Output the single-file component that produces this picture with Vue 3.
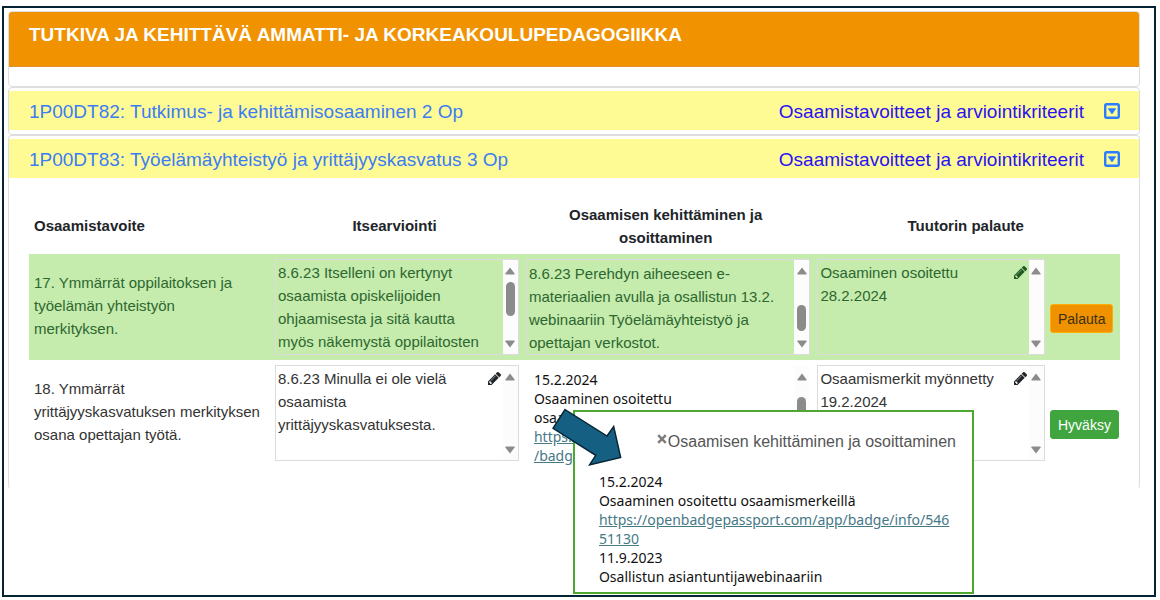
<script setup>
const modules = [
  { id: 'm82', title: '1P00DT82: Tutkimus- ja kehittämisosaaminen 2 Op', open: false },
  { id: 'm83', title: '1P00DT83: Työelämäyhteistyö ja yrittäjyyskasvatus 3 Op', open: true },
]

const rows = [
  {
    id: 17,
    done: true,
    goal: '17. Ymmärrät oppilaitoksen ja\ntyöelämän yhteistyön\nmerkityksen.',
    action: 'Palauta',
    notes: [
      {
        lines: ['8.6.23 Itselleni on kertynyt', 'osaamista opiskelijoiden', 'ohjaamisesta ja sitä kautta', 'myös näkemystä oppilaitosten'],
        thumb: 'upper',
      },
      {
        lines: ['8.6.23 Perehdyn aiheeseen e-', 'materiaalien avulla ja osallistun 13.2.', 'webinaariin Työelämäyhteistyö ja', 'opettajan verkostot.'],
        thumb: 'lower',
      },
      { lines: ['Osaaminen osoitettu', '28.2.2024'], edit: true },
    ],
  },
  {
    id: 18,
    done: false,
    goal: '18. Ymmärrät\nyrittäjyyskasvatuksen merkityksen\nosana opettajan työtä.',
    action: 'Hyväksy',
    notes: [
      { lines: ['8.6.23 Minulla ei ole vielä', 'osaamista', 'yrittäjyyskasvatuksesta.'], edit: true },
      { callout: true, thumb: 'middle' },
      { lines: ['Osaamismerkit myönnetty', '19.2.2024'], edit: true },
    ],
  },
]
</script>

<template>
  <main class="frame">
    <header class="card heading-card">
      <h1>TUTKIVA JA KEHITTÄVÄ AMMATTI- JA KORKEAKOULUPEDAGOGIIKKA</h1>
    </header>

    <section v-for="m in modules" :key="m.id" class="card" :class="{ open: m.open }">
      <div class="bar">
        <h2>{{ m.title }}</h2>
        <a class="criteria" href="#">Osaamistavoitteet ja arviointikriteerit</a>
        <button class="toggle" type="button" aria-label="Avaa tai sulje">
          <svg viewBox="0 0 16 16" width="16" height="16">
            <rect x="1.2" y="1.2" width="13.6" height="13.6" rx="1.5" fill="none" stroke="#2b7cff" stroke-width="2.4" />
            <path d="M4.3 5.3h7.4q.6.2.2.8L8.5 10.8q-.5.5-1 0L4.1 6.1q-.4-.6.2-.8z" fill="#2b7cff" />
          </svg>
        </button>
      </div>

      <div v-if="m.open" class="body">
        <table>
          <colgroup>
            <col class="c-goal" />
            <col class="c-self" />
            <col />
            <col class="c-tutor" />
            <col class="c-act" />
          </colgroup>
          <thead>
            <tr>
              <th class="left" scope="col">Osaamistavoite</th>
              <th scope="col">Itsearviointi</th>
              <th scope="col">Osaamisen kehittäminen ja<br />osoittaminen</th>
              <th scope="col" colspan="2">Tuutorin palaute</th>
            </tr>
          </thead>
          <tbody>
            <tr v-for="r in rows" :key="r.id" :class="{ done: r.done }">
              <td class="goal">{{ r.goal }}</td>
              <td v-for="(n, i) in r.notes" :key="i">
                <div class="note-wrap">
                  <div class="note" :class="{ bare: n.callout }">
                    <div v-if="n.callout" class="snippet">
                      15.2.2024<br />Osaaminen osoitettu<br />osaamismerkeillä<br />
                      <a href="#">https://openbadge<br />/badge/info/54651</a>
                    </div>
                    <div v-else class="note-text" :class="{ scrolled: n.thumb === 'lower' }">
                      <button v-if="n.edit" class="edit" type="button" aria-label="Muokkaa">
                        <svg viewBox="0 149 1515 1515" width="13" height="13">
                          <path
                            fill="currentColor"
                            fill-rule="evenodd"
                            d="M363 1536l91-91-235-235-91 91v107h128v128zM886 608q0-22-22-22-10 0-17 7l-542 542q-7 7-7 17 0 22 22 22 10 0 17-7l542-542q7-7 7-17zM832 416l416 416-832 832H0v-416zM1515 512q0 53-37 90l-166 166-416-416 166-165q36-38 90-38 53 0 91 38l235 234q37 39 37 91z"
                          />
                        </svg>
                      </button>
                      <span v-for="l in n.lines" :key="l" class="line">{{ l }}</span>
                    </div>
                    <div class="scroll" aria-hidden="true">
                      <svg viewBox="0 0 10 8" width="10" height="8"><path d="M5 .5 9.6 6.6q.2.9-.6.9H1q-.8 0-.6-.9z" /></svg>
                      <div class="track"><i v-if="n.thumb" class="thumb" :class="n.thumb"></i></div>
                      <svg viewBox="0 0 10 8" width="10" height="8"><path d="M5 7.5.4 1.4Q.2.5 1 .5h8q.8 0 .6.9z" /></svg>
                    </div>
                  </div>

                  <template v-if="n.callout">
                    <aside class="popup">
                      <div class="popup-title">
                        <button type="button" class="close" aria-label="Sulje">
                          <svg viewBox="0 0 10 10" width="10" height="10">
                            <path d="M1.2 1.2l7.6 7.6M8.8 1.2l-7.6 7.6" stroke="#7c7c7c" stroke-width="2.4" fill="none" />
                          </svg>
                        </button>
                        <span>Osaamisen kehittäminen ja osoittaminen</span>
                      </div>
                      <p>
                        15.2.2024<br />Osaaminen osoitettu osaamismerkeillä<br />
                        <a href="#">https://openbadgepassport.com/app/badge/info/546<br />51130</a><br />
                        11.9.2023<br />Osallistun asiantuntijawebinaariin
                      </p>
                    </aside>
                    <svg class="arrow" viewBox="552 408 70 59" width="70" height="59" aria-hidden="true">
                      <path
                        d="M565 409.5 607 436 613.7 426.5 620.7 457.5 589.5 465 595.7 455.3 553 428.3z"
                        fill="#156082"
                        stroke="#042433"
                        stroke-width="1.4"
                      />
                    </svg>
                  </template>
                </div>
              </td>
              <td class="act">
                <button class="btn" :class="r.done ? 'orange' : 'green'" type="button">{{ r.action }}</button>
              </td>
            </tr>
          </tbody>
        </table>
      </div>
    </section>
  </main>
</template>

<style>
body {
  background: #fff;
}
</style>

<style scoped>
* {
  box-sizing: border-box;
}
.frame {
  margin: 6px 4px 3px 2px;
  padding: 3px 14px 0 4px;
  min-height: calc(100vh - 9px);
  border: 2px solid #042433;
  font-family: "Liberation Sans", Arial, sans-serif;
  font-size: 15px;
  line-height: 23px;
  color: #333;
  display: flow-root;
}
button {
  font-family: inherit;
  border: 0;
  padding: 0;
  background: none;
  cursor: pointer;
}
svg {
  display: block;
}
.card {
  border: 1px solid #dedede;
  border-radius: 4px;
  padding: 3px 0 4px;
}
.heading-card {
  padding: 0 0 19px;
}
h1 {
  margin: 0;
  padding: 11px 20px 20px;
  font-size: 19px;
  line-height: 23px;
  font-weight: 700;
  color: #fff;
  background: #f19200;
  border-bottom: 1px solid #e0922a;
  border-radius: 3px 3px 0 0;
}
.bar {
  display: flex;
  align-items: center;
  height: 39px;
  padding: 1px 19px 0 20px;
  background: #fffb94;
}
h2 {
  flex: 1;
  margin: 0;
  font-size: 19px;
  font-weight: 400;
  color: #3c7df5;
}
.criteria {
  font-size: 19px;
  color: #2a12f5;
  text-decoration: none;
}
.toggle {
  margin-left: 20px;
}
.open {
  border-bottom-color: transparent;
}
.body {
  padding: 19px 19px 18px 20px;
}
table {
  width: 100%;
  table-layout: fixed;
  border-collapse: collapse;
}
.c-goal {
  width: 22%;
}
.c-self {
  width: 23%;
}
.c-tutor {
  width: 21.5%;
}
.c-act {
  width: 74px;
}
th {
  height: 57px;
  padding: 0 5px;
  font-weight: 700;
  color: #212529;
}
th.left {
  text-align: left;
}
td {
  padding: 5px 1px 5px 6px;
  vertical-align: middle;
}
.goal {
  padding: 3px 0 6px 5px;
  white-space: pre-line;
}
.done {
  background: #c5ebad;
  color: #2d6730;
}
.note-wrap {
  position: relative;
}
.note {
  display: flex;
  height: 96px;
  border: 1px solid #dcdcdc;
}
.bare {
  border-color: transparent;
}
.note-text {
  flex: 1;
  min-width: 0;
  padding: 1px 0 0 2px;
  white-space: nowrap;
}
.scrolled {
  padding-top: 2px;
}
.line {
  display: block;
}
.edit {
  float: right;
  margin: 5px 2px 0 0;
  color: #212529;
}
.done .edit {
  color: #1f5a24;
}
.scroll {
  display: flex;
  flex: none;
  flex-direction: column;
  align-items: center;
  width: 15px;
  padding: 7px 0 6px;
  background: #fcfcfc;
}
.scroll svg {
  fill: #8b8b8b;
}
.track {
  display: flex;
  flex: 1;
  flex-direction: column;
}
.thumb {
  width: 9px;
  border-radius: 5px;
  background: #8b8b8b;
}
.upper {
  height: 34px;
  margin-top: 7px;
}
.lower {
  height: 26px;
  margin: auto 0 9px;
}
.middle {
  height: 26px;
  margin-top: 16px;
}
.snippet,
.popup p {
  font-family: "Noto Sans", "Open Sans", sans-serif;
  font-size: 14px;
  line-height: 19px;
  color: #111;
}
.snippet {
  flex: 1;
  min-width: 0;
  padding: 4px 0 0 7px;
  white-space: nowrap;
}
.snippet a,
.popup a {
  color: #467886;
}
.popup {
  position: absolute;
  z-index: 1;
  left: 47px;
  top: 45px;
  width: 401px;
  padding: 18px 16px 6px 24px;
  border: 2px solid #4ea72e;
  background: #fff;
}
.popup-title {
  display: flex;
  justify-content: flex-end;
  align-items: center;
  padding-bottom: 19px;
  font-size: 16px;
  color: #555;
}
.close {
  margin: 0 1px 5px 0;
}
.popup p {
  margin: 0;
  white-space: nowrap;
}
.arrow {
  position: absolute;
  z-index: 2;
  left: 26px;
  top: 43px;
}
.act {
  padding: 23px 0 0 4px;
}
.btn {
  height: 29px;
  padding: 0 7px;
  border: 1px solid;
  border-radius: 3px;
  font-size: 14px;
  line-height: 20px;
}
.orange {
  background: #f09200;
  border-color: #ffac05;
  color: #3a2f14;
}
.green {
  background: #40a53e;
  border-color: #40a53e;
  color: #fff;
}
</style>
